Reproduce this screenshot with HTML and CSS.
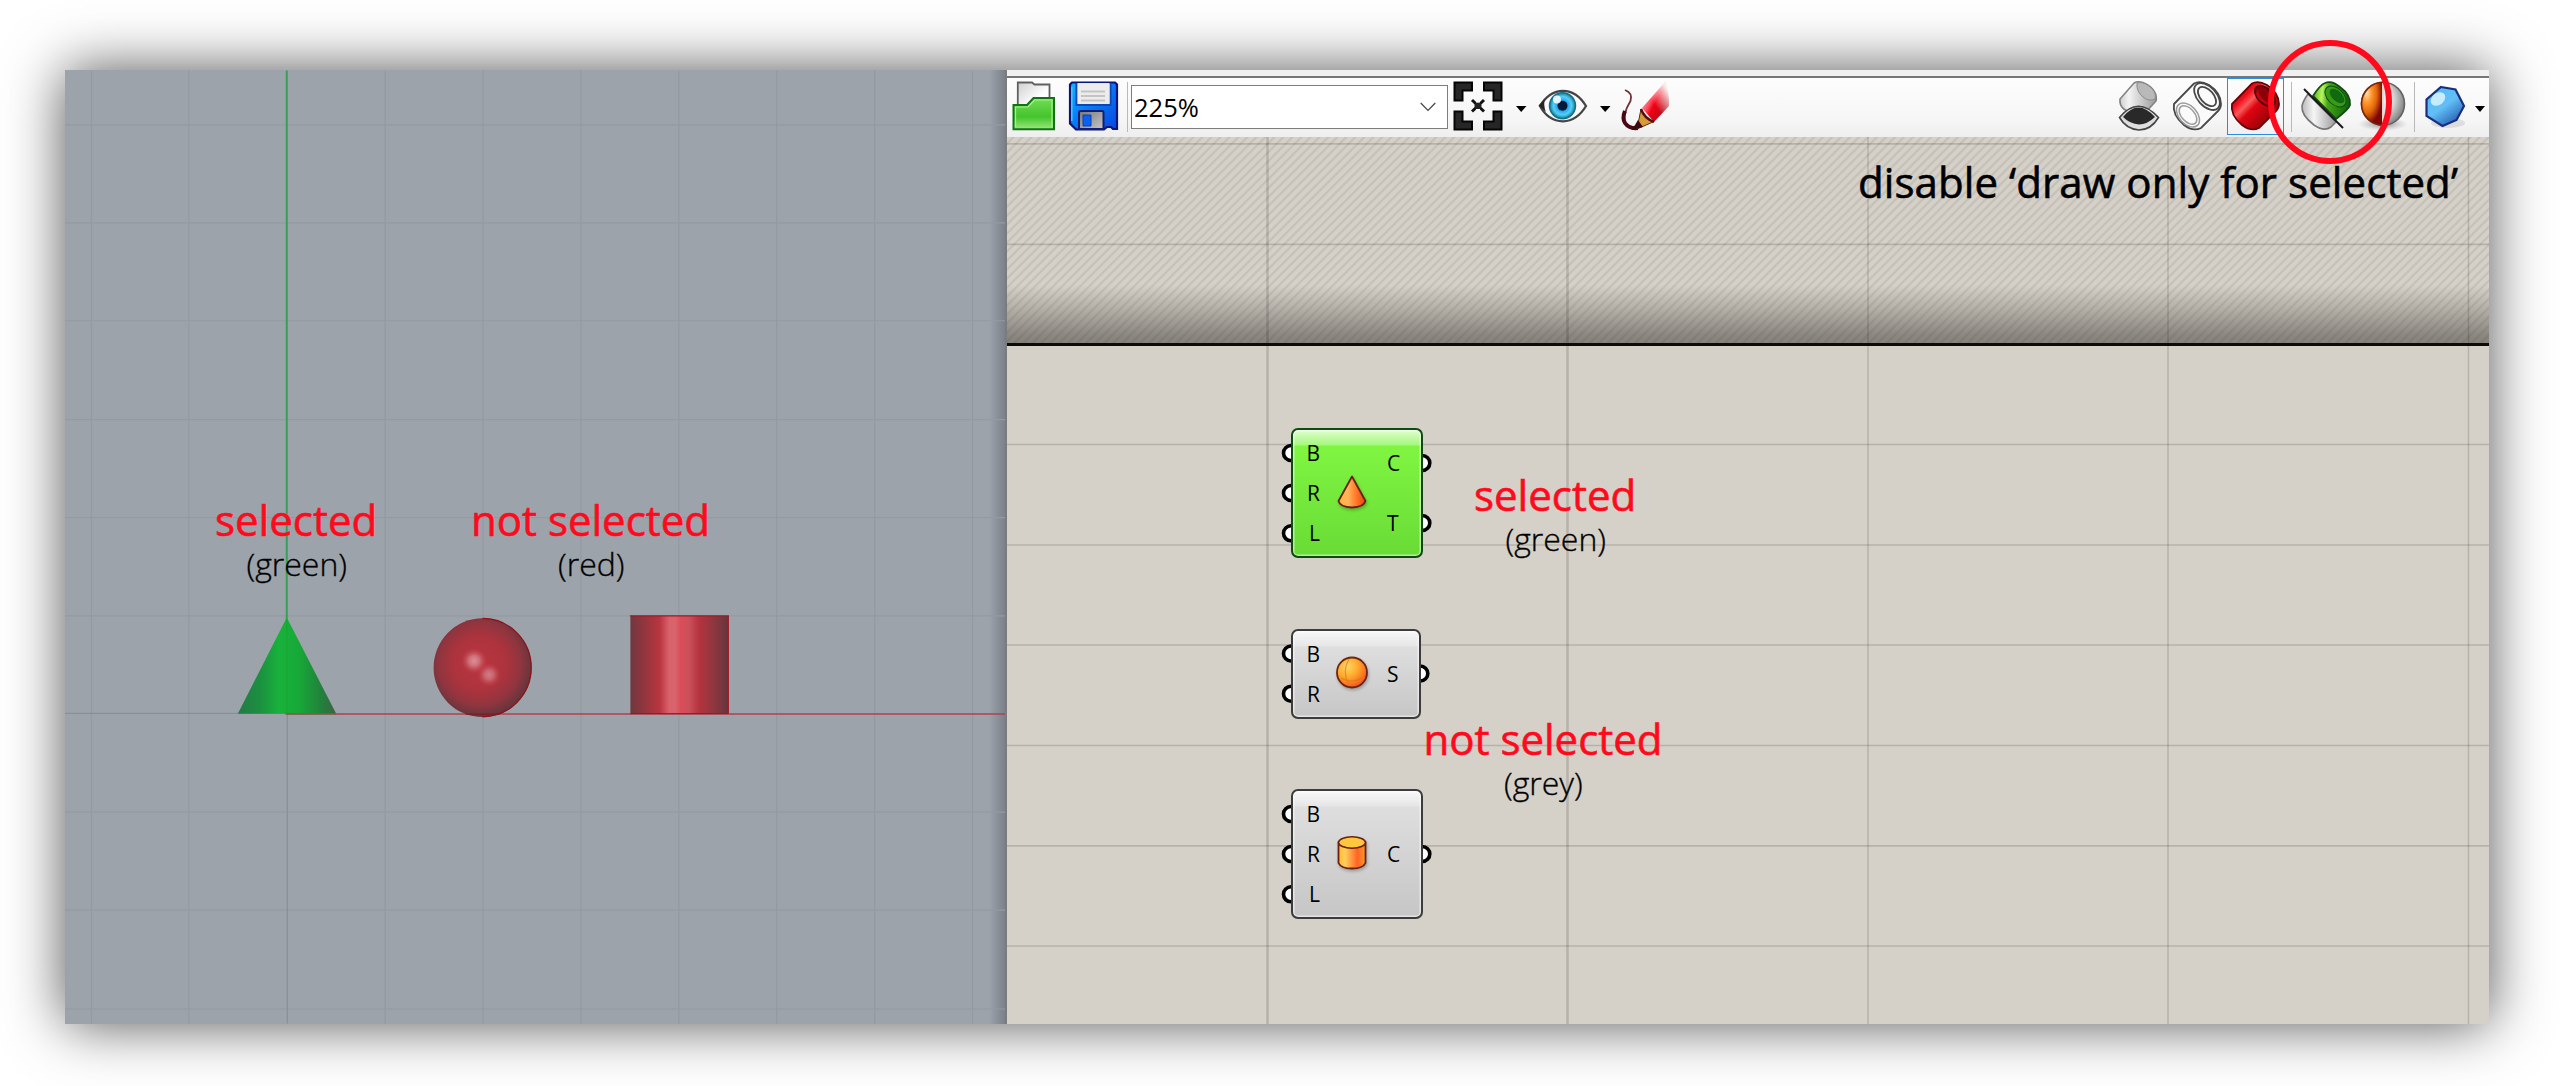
FILE: index.html
```
<!DOCTYPE html>
<html lang="en">
<head>
<meta charset="utf-8">
<title>Preview: draw only for selected</title>
<link rel="stylesheet" href="styles.css">
</head>
<body>
<main class="frame">
  <section class="viewport">
    <svg class="scene" width="941" height="954" viewBox="65 70 941 954">
      <defs>
        <linearGradient id="cone" x1="238" x2="336" y1="0" y2="0" gradientUnits="userSpaceOnUse">
          <stop offset="0" stop-color="#237a45"/><stop offset=".22" stop-color="#1b8f40"/><stop offset=".42" stop-color="#18b23b"/><stop offset=".62" stop-color="#17a938"/><stop offset=".85" stop-color="#21823b"/><stop offset="1" stop-color="#3c6443"/>
        </linearGradient>
        <radialGradient id="ball" cx=".47" cy=".46" r=".54">
          <stop offset="0" stop-color="#b9353f"/><stop offset=".5" stop-color="#ad333d"/><stop offset=".78" stop-color="#90353f"/><stop offset="1" stop-color="#64353d"/>
        </radialGradient>
        <radialGradient id="glint"><stop offset="0" stop-color="#d8929b"/><stop offset=".4" stop-color="#d47a84" stop-opacity=".85"/><stop offset="1" stop-color="#c9404b" stop-opacity="0"/></radialGradient>
        <linearGradient id="tube">
          <stop offset="0" stop-color="#70383f"/><stop offset=".12" stop-color="#8e353e"/><stop offset=".3" stop-color="#b9353f"/><stop offset=".36" stop-color="#cf515b"/><stop offset=".4" stop-color="#d8636c"/><stop offset=".46" stop-color="#d8636c"/><stop offset=".51" stop-color="#dc4d59"/><stop offset=".6" stop-color="#c9505a"/><stop offset=".7" stop-color="#b5333e"/><stop offset=".85" stop-color="#8f363f"/><stop offset="1" stop-color="#65363d"/>
        </linearGradient>
      </defs>
      <g class="grid-fine">
        <path d="M91.5 70V1024M189 70V1024M385.500 70V1024M483.500 70V1024M581.500 70V1024M679.500 70V1024M777.500 70V1024M875.500 70V1024M973.500 70V1024"/>
        <path d="M65 124.500H1006M65 222.500H1006M65 320.500H1006M65 419.500H1006M65 517.500H1006M65 616H1006M65 812.500H1006M65 910.500H1006M65 1009.500H1006"/>
      </g>
      <path d="M287.500 714V1024M65 713.500H287" stroke="#868b92"/>
      <path d="M287 70V714" stroke="#38a056" stroke-width="2"/>
      <path d="M286 714.300H1006" stroke="#b0404a" stroke-width="1.500"/>
      <path d="M287 617.500L336.500 714H238z" fill="url(#cone)"/>
      <path d="M287 620V714" stroke="#16a52c"/>
      <path d="M286 714H336" stroke="#2a8a32"/>
      <ellipse cx="483" cy="667.800" rx="49" ry="49.500" fill="url(#ball)"/>
      <path d="M483 618.500a48.700 49.200 0 0 1 0 98.500" fill="none" stroke="#8f1119" stroke-width="1.200"/>
      <circle cx="474.500" cy="661" r="13" fill="url(#glint)"/>
      <circle cx="489.500" cy="675" r="12" fill="url(#glint)" opacity=".8"/>
      <path d="M466 714.300H500" stroke="#7d1820"/>
      <rect x="631" y="616" width="98" height="98" fill="url(#tube)"/>
      <path d="M630.500 616H729V714" fill="none" stroke="#9d1a24" stroke-width="1.300"/>
      <path d="M631 713.800H729" stroke="#8e1b25"/>
    </svg>
    <span class="note at-cone">selected</span>
    <span class="note-sub at-cone-sub">(green)</span>
    <span class="note at-ball">not selected</span>
    <span class="note-sub at-ball-sub">(red)</span>
  </section>

  <section class="editor">
    <div class="title-edge"></div>
    <div class="toolbar">
      <svg class="ico open" width="50" height="50" viewBox="0 0 50 50">
        <defs><linearGradient id="fg" x2="0" y2="1"><stop offset="0" stop-color="#74dc55"/><stop offset=".6" stop-color="#44c42c"/><stop offset="1" stop-color="#9be87d"/></linearGradient>
        <linearGradient id="pg" x2="1" y2="1"><stop offset="0" stop-color="#cfcfcf"/><stop offset=".6" stop-color="#fff"/></linearGradient></defs>
        <path d="M7.800 30V1.500H22L24.500 3.500H39.500V20" fill="url(#pg)" stroke="#606060" stroke-width="1.800"/>
        <path d="M3.500 48.300V24H17L23.500 17H44V48.300z" fill="url(#fg)" stroke="#0f7413" stroke-width="2"/>
        <path d="M5.500 46V26H18L24.500 19H42V46" fill="none" stroke="#a5ef8d" stroke-width="1.200"/>
      </svg>
      <svg class="ico save" width="50" height="50" viewBox="0 0 50 50">
        <defs><linearGradient id="sv" x2="1" y2="1"><stop offset="0" stop-color="#12b5ff"/><stop offset=".45" stop-color="#087cf6"/><stop offset="1" stop-color="#0a45e0"/></linearGradient>
        <linearGradient id="mt" x2="1" y2="1"><stop offset="0" stop-color="#777"/><stop offset="1" stop-color="#c6c6c6"/></linearGradient></defs>
        <path d="M4 1.500H47L49 3.500V48H45L43 46H39L36 48.500H8L2 42.500V3.500z" fill="url(#sv)" stroke="#0b1577" stroke-width="2.200"/>
        <path d="M8.500 2V24H42.500V2" fill="#e6e6e6" stroke="#0d47b4" stroke-width="2"/>
        <path d="M9.700 3H41.500V22.800H9.700z" fill="#ececec"/>
        <path d="M13 10.500H37M13 15H37M13 19.500H37" stroke="#c4c4c4" stroke-width="2"/>
        <path d="M3.800 6V40" stroke="#49c8ff" stroke-width="1.500"/>
        <path d="M11 48V31.500Q11 30 12.500 30H34Q35.500 30 35.500 31.500V48z" fill="url(#mt)" stroke="#101d74" stroke-width="2"/>
        <path d="M15 34H23V45H15z" fill="#0960f5" stroke="#0b3eae"/>
      </svg>
      <i class="rule rule-left"></i>
      <div class="zoom-box"><span>225%</span>
        <svg width="16" height="10" viewBox="0 0 16 10"><path d="M.7 1L8 8.300L15.300 1" fill="none" stroke="#444" stroke-width="1.200"/></svg>
      </div>
      <svg class="ico fit" width="52" height="50" viewBox="0 0 52 50">
        <g fill="#262626" stroke="#050505" stroke-width="2"><path d="M2.500 1.500H20V9.500H10.500V19.500H2.500zM49.500 1.500H32V9.500H41.500V19.500H49.500zM2.500 48.500H20V40.500H10.500V30.500H2.500zM49.500 48.500H32V40.500H41.500V30.500H49.500z"/></g>
        <path d="M20 19L32 30.500M32 19L20 30.500" stroke="#111" stroke-width="3"/><circle cx="26" cy="24.700" r="3.500" fill="#222"/>
        <path d="M24 21H28M24 28.500H28" stroke="#fff"/>
      </svg>
      <svg class="drop drop-fit" width="11" height="6" viewBox="0 0 11 6"><path d="M0 0H10.500L5.200 6z"/></svg>
      <svg class="ico eye" width="52" height="50" viewBox="0 0 52 50">
        <defs><radialGradient id="iris"><stop offset="0" stop-color="#0878d8"/><stop offset=".3" stop-color="#1898f0"/><stop offset=".7" stop-color="#54cff5"/><stop offset="1" stop-color="#167b94"/></radialGradient></defs>
        <path d="M3 25Q12 10 26 9.800Q40 10 49 25Q40 40 26 40.300Q11 40 3 25z" fill="#fafafa" stroke="#444" stroke-width="2.300"/>
        <path d="M1.500 24.500L8 18Q6 24 9 31z" fill="#252525"/>
        <circle cx="25.500" cy="24.700" r="13" fill="url(#iris)" stroke="#14708a" stroke-width="1.500"/>
        <circle cx="25.500" cy="24.700" r="5" fill="#021b38"/><circle cx="20" cy="18.500" r="4" fill="#fff" opacity=".85"/>
      </svg>
      <svg class="drop drop-eye" width="11" height="6" viewBox="0 0 11 6"><path d="M0 0H10.500L5.200 6z"/></svg>
      <svg class="ico pencil" width="50" height="50" viewBox="0 0 50 50">
        <defs><linearGradient id="pc" x1=".1" y1=".2" x2=".9" y2=".8"><stop offset="0" stop-color="#ffb8bf"/><stop offset=".35" stop-color="#fb4b5d"/><stop offset=".5" stop-color="#f20014"/><stop offset="1" stop-color="#a7101a"/></linearGradient>
        <linearGradient id="pf" x1="0" y1="1" x2="1" y2="0"><stop offset=".45" stop-color="#fff" stop-opacity="0"/><stop offset=".85" stop-color="#f9f9f9" stop-opacity=".95"/></linearGradient></defs>
        <path d="M5 9Q13 12 10.500 20Q2 34 5 42Q9 48 19 45" fill="none" stroke="#6d3038" stroke-width="1.800"/>
        <path d="M5 30Q2 37 5 42Q9 48 18 47" fill="none" stroke="#480712" stroke-width="4"/>
        <path d="M22 27L45 1Q50 14 49 25L34 41z" fill="url(#pc)"/><path d="M21.500 27L45 0Q51 14 50 26L34 42z" fill="url(#pf)"/>
        <path d="M21 28Q24 36 33 41L17 48z" fill="#d69b36" stroke="#5c3210"/><path d="M18 39L23 46L12 49z" fill="#3a0911"/><path d="M21 28Q24 37 34 41" fill="none" stroke="#5b0c12" stroke-width="2.400"/>
      </svg>

      <svg class="ico preview-off" width="50" height="50" viewBox="0 0 50 50">
        <defs><linearGradient id="gy" x2="1"><stop offset="0" stop-color="#cfcfcf"/><stop offset=".25" stop-color="#f4f4f4"/><stop offset="1" stop-color="#9a9a9a"/></linearGradient></defs>
        <path d="M19 2Q24-1 31 3Q43 10 41 20L31 31L17 31Q4 29 5 18z" fill="url(#gy)" stroke="#828282" stroke-width="1.600"/>
        <path d="M22 2Q21 10 28 16Q34 21 40 18Q42 11 34 5Q27 0 22 2z" fill="#b9b9b9" stroke="#8c8c8c"/>
        <path d="M4.500 36.500Q23 14 43.500 36.500Q36 49 24 49Q11 48 4.500 36.500z" fill="#dedede" stroke="#444" stroke-width="1.600"/>
        <path d="M8 36Q23 17 40 36Q32 43.500 24 43.500Q15 43 8 36z" fill="#292929"/>
      </svg>
      <svg class="ico preview-wire" width="50" height="50" viewBox="0 0 50 50">
        <g fill="#fbfbfb" stroke="#484848" stroke-width="1.800"><path d="M22 2.500Q28-1 37 4Q49 12 49 23Q49 27 46 30L29 47Q21 51 12 44Q0 34 2 23z"/>
        <ellipse cx="35" cy="15.500" rx="9.500" ry="16" transform="rotate(-42 35 15.500)"/><ellipse cx="35" cy="15.500" rx="6.500" ry="11.500" transform="rotate(-42 35 15.500)"/></g>
        <g fill="none" stroke="#9b9b9b" stroke-width="1.500"><ellipse cx="16" cy="34" rx="9" ry="14" transform="rotate(-42 16 34)"/><ellipse cx="16" cy="34" rx="6.500" ry="11" transform="rotate(-42 16 34)"/></g>
      </svg>
      <div class="active-tool">
        <svg class="ico" width="50" height="50" viewBox="0 0 50 50">
          <defs><linearGradient id="rd" x1=".1" y1=".2" x2=".8" y2=".9"><stop offset="0" stop-color="#b8000c"/><stop offset=".2" stop-color="#f1101c"/><stop offset=".35" stop-color="#f85a5a"/><stop offset=".5" stop-color="#df0510"/><stop offset="1" stop-color="#8b0008"/></linearGradient></defs>
          <path d="M22 2.500Q28-1 37 4Q49 12 49 23Q49 27 46 30L29 47Q21 51 12 44Q0 34 2 23z" fill="url(#rd)" stroke="#67040a" stroke-width="1.800"/>
          <ellipse cx="35" cy="15" rx="7.500" ry="12.500" transform="rotate(-44 35 15)" fill="#8d0008" stroke="#4d0004" stroke-width="1.500"/>
          <path d="M28 8Q28 17 41 24Q29 22 26 13z" fill="#c10611"/>
        </svg>
      </div>
      <i class="rule rule-a"></i>
      <svg class="ico selected-only" width="50" height="50" viewBox="0 0 50 50">
        <defs><linearGradient id="gn" x1="0" y1=".5" x2="1" y2=".6"><stop offset="0" stop-color="#55b41b"/><stop offset=".22" stop-color="#b8f660"/><stop offset=".4" stop-color="#46a516"/><stop offset="1" stop-color="#08620d"/></linearGradient>
        <linearGradient id="gw"><stop offset="0" stop-color="#b9b9b9"/><stop offset=".35" stop-color="#f6f6f6"/><stop offset="1" stop-color="#999"/></linearGradient></defs>
        <path d="M8 13L36 41L31 46Q24 51 14 44Q1 34 2 25Q3 20 8 13z" fill="url(#gw)" stroke="#777" stroke-width="1.600"/>
        <path d="M13 15Q20 4 25 2Q32-1 40 6Q51 14 50 24Q49 28 36 38z" fill="url(#gn)" stroke="#164a14" stroke-width="1.800"/>
        <ellipse cx="35.500" cy="15.500" rx="8" ry="12.500" transform="rotate(-46 35.500 15.500)" fill="#3b9a17" stroke="#0b5110"/><ellipse cx="37" cy="15" rx="5" ry="9" transform="rotate(-46 37 15)" fill="#0f6a10"/>
        <path d="M4 8L43 47" stroke="#181818" stroke-width="2"/>
      </svg>
      <svg class="ico mesh-ball" width="50" height="50" viewBox="0 0 50 50">
        <defs><radialGradient id="or" cx=".25" cy=".25" r=".85"><stop offset="0" stop-color="#ffe0ad"/><stop offset=".25" stop-color="#ff9a30"/><stop offset=".55" stop-color="#e16408"/><stop offset=".85" stop-color="#7e0800"/></radialGradient>
        <radialGradient id="wh" cx=".35" cy=".4" r=".65"><stop offset=".1" stop-color="#f5f5f5"/><stop offset=".6" stop-color="#dadada"/><stop offset="1" stop-color="#868686"/></radialGradient>
        <radialGradient id="sh"><stop offset="0" stop-color="#555" stop-opacity=".7"/><stop offset="1" stop-color="#999" stop-opacity="0"/></radialGradient></defs>
        <ellipse cx="25" cy="43" rx="25" ry="7" fill="url(#sh)"/>
        <circle cx="25" cy="22.800" r="21.500" fill="url(#wh)" stroke="#626262" stroke-width="1.600"/>
        <path d="M25 1.300A21.500 21.500 0 0 0 25 44.300z" fill="url(#or)" stroke="#792409" stroke-width="1.600"/><path d="M25 2V44" stroke="#fff" stroke-width="1.600"/>
      </svg>
      <i class="rule rule-b"></i>
      <svg class="ico gem" width="50" height="50" viewBox="0 0 50 50">
        <defs><linearGradient id="gem" x2=".7" y2="1"><stop offset="0" stop-color="#54b9f4"/><stop offset=".55" stop-color="#62bff6"/><stop offset="1" stop-color="#245db2"/></linearGradient></defs>
        <ellipse cx="28" cy="42" rx="17" ry="5" fill="#aaa" opacity=".3"/>
        <path d="M21 6L35.500 8.500L44 25L36.500 39L22.500 45L6.500 35V18.500z" fill="url(#gem)" stroke="#1b2e7e" stroke-width="2.200"/>
        <ellipse cx="18" cy="18" rx="8" ry="6" transform="rotate(-38 18 18)" fill="#d9f4ff" opacity=".85"/>
      </svg>
      <svg class="drop drop-gem" width="10" height="6" viewBox="0 0 10 6"><path d="M0 0H10L5 6z"/></svg>
    </div>

    <div class="canvas">
      <div class="beyond"></div>
      <svg class="scene" width="1482" height="887" viewBox="1007 137 1482 887">
        <g class="grid-canvas">
          <path stroke-width="2.500" d="M1267.500 137V1024M1567.500 137V1024"/><path stroke-width="1.500" d="M1868 137V1024M2168 137V1024M2468.500 137V1024"/>
          <path stroke-width="1.700" d="M1007 143.800H2489M1007 244.300H2489M1007 444.500H2489M1007 545H2489M1007 645H2489M1007 745.500H2489M1007 845.800H2489M1007 946H2489"/>
        </g>
        <path d="M1007 344.500H2489" stroke="#0b0b0a" stroke-width="3"/>
        <g class="ports">
          <circle cx="1291" cy="453" r="7.500"/><circle cx="1291" cy="493" r="7.500"/><circle cx="1291" cy="533.300" r="7.500"/><circle cx="1422.300" cy="463" r="7.500"/><circle cx="1422.300" cy="523" r="7.500"/>
          <circle cx="1291" cy="653.500" r="7.500"/><circle cx="1291" cy="693.700" r="7.500"/><circle cx="1420.300" cy="673.500" r="7.500"/>
          <circle cx="1291" cy="814" r="7.500"/><circle cx="1291" cy="854" r="7.500"/><circle cx="1291" cy="894.300" r="7.500"/><circle cx="1422.300" cy="854" r="7.500"/>
        </g>
      </svg>

      <div class="node node-cone">
        <div class="pins pins-in"><span>B</span><span>R</span><span>L</span></div>
        <svg class="glyph" width="34" height="38" viewBox="0 0 34 38">
          <defs><linearGradient id="oc"><stop offset="0" stop-color="#ffb43b"/><stop offset=".35" stop-color="#ffb45a"/><stop offset=".65" stop-color="#ff7a28"/><stop offset="1" stop-color="#e8421a"/></linearGradient></defs>
          <path d="M17 3.500L3.500 28Q5 34 17 34.500Q29 34 30.500 28z" fill="url(#oc)" stroke="#6b2010" stroke-width="1.800" stroke-linejoin="round"/>
        </svg>
        <div class="pins pins-out"><span>C</span><span>T</span></div>
      </div>
      <div class="node node-ball">
        <div class="pins pins-in"><span>B</span><span>R</span></div>
        <svg class="glyph" width="34" height="38" viewBox="0 0 34 38">
          <defs><radialGradient id="os" cx=".35" cy=".3" r=".75"><stop offset="0" stop-color="#ffd565"/><stop offset=".45" stop-color="#ffac2d"/><stop offset="1" stop-color="#f5521c"/></radialGradient></defs>
          <circle cx="17" cy="18.500" r="15" fill="url(#os)" stroke="#6d2412" stroke-width="1.800"/>
          <path d="M14 5Q7 17 13 29M6 24Q16 30 27 24" fill="none" stroke="#cf7518" stroke-width="1.200" opacity=".6"/>
        </svg>
        <div class="pins pins-out"><span>S</span></div>
      </div>
      <div class="node node-tube">
        <div class="pins pins-in"><span>B</span><span>R</span><span>L</span></div>
        <svg class="glyph" width="34" height="38" viewBox="0 0 34 38">
          <defs><linearGradient id="ot"><stop offset="0" stop-color="#ffb92d"/><stop offset=".25" stop-color="#ffce5b"/><stop offset=".7" stop-color="#ff6424"/><stop offset="1" stop-color="#ff9a2a"/></linearGradient></defs>
          <path d="M3.500 8.500V29Q6 34.500 17 34.500Q28 34.500 30.500 29V8.500z" fill="url(#ot)" stroke="#6b2010" stroke-width="1.800"/>
          <ellipse cx="17" cy="8.500" rx="13.500" ry="5.800" fill="#ffc740" stroke="#6b2010" stroke-width="1.600"/>
        </svg>
        <div class="pins pins-out"><span>C</span></div>
      </div>

      <span class="note node-note-a">selected</span>
      <span class="note-sub node-sub-a">(green)</span>
      <span class="note node-note-b">not selected</span>
      <span class="note-sub node-sub-b">(grey)</span>
      <span class="note hint">disable ‘draw only for selected’</span>
    </div>
  </section>
  <div class="marker"></div>
</main>
</body>
</html>
```
FILE: styles.css
```
* { box-sizing: border-box; }

body {
  margin: 0;
  height: 1086px;
  overflow: hidden;
  padding: 70px 71px 62px 65px;
  background: #fff;
  font-family: "Open Sans", "Noto Sans", sans-serif;
  color: #000;
}

.frame {
  position: relative;
  display: flex;
  width: 2424px;
  height: 954px;
  box-shadow: 0 0 54px rgba(0, 0, 0, .68);
}

.viewport {
  position: relative;
  width: 940px;
  background: linear-gradient(90deg, transparent 924px, rgba(60, 66, 76, .35)), #9da3ab;
}

.scene { display: block; }
.viewport .scene { width: 940px; }
.grid-fine path { stroke: #949aa2; stroke-width: 1.2; }

.editor {
  display: flex;
  flex-direction: column;
  width: 1484px;
  border-left: 2px solid #7c7c7e;
}

.title-edge {
  height: 8px;
  background: #f0f0f0;
  border-bottom: 2px solid #777;
}

.toolbar {
  display: flex;
  align-items: flex-start;
  height: 59px;
  padding: 3px 4px 0 3px;
  background: linear-gradient(#fdfdfd, #f6f6f6 70%, #eee);
}
.ico { display: block; flex: none; overflow: visible; }
.save { margin-left: 8px; }
.rule { width: 1px; height: 50px; margin-top: 1px; background: #b9b9b9; }
.rule-left { margin-left: 9px; }
.zoom-box {
  display: flex;
  align-items: center;
  justify-content: space-between;
  width: 317px;
  height: 44px;
  margin: 4px 0 0 3px;
  padding: 0 11px 0 2px;
  border: 1px solid #7d7d7d;
  background: #fff;
  font: 25.5px/42px "Open Sans", sans-serif;
}
.fit { margin-left: 4px; }
.drop { flex: none; margin-top: 25px; }
.drop-fit { margin-left: 12px; }
.eye { margin-left: 10px; }
.drop-eye { margin-left: 11px; }
.pencil { margin-left: 9px; }
.preview-off { margin-left: auto; }
.preview-wire { margin-left: 7px; }
.active-tool {
  width: 57px;
  height: 57px;
  margin: -3px 0 0 5px;
  padding: 2px;
  border: 1px solid #2b8de0;
}
.rule-a { margin-left: 7px; }
.selected-only { margin-left: 8px; }
.mesh-ball { margin-left: 8px; }
.rule-b { margin-left: 6px; }
.gem { margin-left: 5px; }
.drop-gem { margin-left: 5px; }

.canvas {
  position: relative;
  height: 887px;
  overflow: hidden;
  background: #d5d0c8;
}
.beyond {
  position: absolute;
  inset: 0 0 auto;
  height: 206px;
  background:
    linear-gradient(transparent 148px, rgba(70, 68, 60, .25) 174px, rgba(60, 58, 52, .48) 198px, rgba(60, 58, 52, .52)),
    repeating-linear-gradient(135deg, #d5d0c8 0 3px, #c6c1b9 4px 5.36px, #d5d0c8 6.36px);
}
.canvas .scene { position: relative; }
.grid-canvas path { stroke: rgba(0, 0, 0, .145); fill: none; }
.ports circle { fill: #fff; stroke: #000; stroke-width: 3.6; }

.node {
  position: absolute;
  left: 284px;
  display: flex;
  justify-content: space-between;
  align-items: center;
  width: 132px;
  padding: 0 21px 0 14px;
  border: 2px solid #3c3c3c;
  border-radius: 7px;
  box-shadow: inset 0 0 0 1.5px rgba(255, 255, 255, .5);
  background: linear-gradient(#f8f8f8, #e6e6e6 15px, #dedede 16px, #c6c6c6);
}
.node-cone {
  top: 291px;
  height: 130px;
  border-color: #0e4a12;
  background: linear-gradient(#e0ffd0, #a5f77e 15px, #80f541 16px, #68dc36);
}
.node-ball { top: 492px; width: 130px; height: 90px; padding-right: 19px; }
.node-tube { top: 652px; height: 130px; }
.pins {
  display: flex;
  flex-direction: column;
  font-size: 21px;
  line-height: 40.200px;
}
.pins-in { width: 13px; text-align: right; align-items: flex-end; }
.pins-out { width: 13px; }
.node-cone .pins-out { line-height: 60px; }
.glyph { position: absolute; left: 42px; filter: drop-shadow(1px 2px 1.500px rgba(0, 0, 0, .25)); }
.node-cone .glyph { top: 43px; }
.node-ball .glyph { top: 23px; }
.node-tube .glyph { top: 43px; }

.note, .note-sub {
  position: absolute;
  white-space: nowrap;
}
.note {
  font-size: 42px;
  line-height: 46px;
  color: #ff0a1c;
  -webkit-text-stroke: .6px currentColor;
}
.note-sub {
  font-size: 32px;
  line-height: 40px;
  font-weight: 300;
  -webkit-text-stroke: .35px currentColor;
}
.at-cone { left: 150px; top: 427px; }
.at-cone-sub { left: 181.5px; top: 474px; }
.at-ball { left: 406px; top: 427px; }
.at-ball-sub { left: 493px; top: 474px; }
.node-note-a { left: 467px; top: 335px; }
.node-sub-a { left: 498.5px; top: 382px; }
.node-note-b { left: 416.5px; top: 579px; }
.node-sub-b { left: 497px; top: 626px; }
.hint { left: 851px; top: 22px; color: #000; letter-spacing: .08px; }

.marker {
  position: absolute;
  left: 2203px;
  top: -30px;
  width: 124px;
  height: 124px;
  border: 6px solid #ff0a1c;
  border-radius: 50%;
}
```
